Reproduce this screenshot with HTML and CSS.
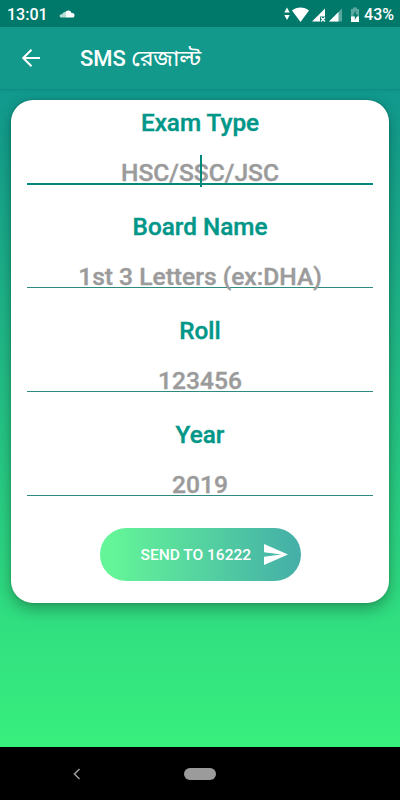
FILE: index.html
```
<!DOCTYPE html>
<html lang="bn">

<head>
    <meta charset="UTF-8">
    <meta name="viewport" content="width=device-width, initial-scale=1.0">
    <title>SMS রেজাল্ট</title>
    <link rel="stylesheet" href="styles.css">
</head>

<body>
    <div class="status-bar">
        <span class="clock">13:01</span>
        <svg class="cloud" width="16" height="9" viewBox="0 0 16 9">
            <path d="M7 1.2C10 -.5 12.200 1 12.500 3.200C14.500 2.800 15.700 4 15.500 5.600C15.400 7 14.500 7.600 13.500 7.600H7z" fill="#fff" />
            <path d="M7 1.500V7.600H2.500C0 7.500 0 4.500 2.500 4.300C3.500 4.200 4 2 7 1.500z" fill="#b9dcd7" />
        </svg>
        <div class="status-icons">
            <svg width="81" height="18" viewBox="0 0 81 18" fill="#fff">
                <path d="M3 2.500l2.700 5h-5.400zM3 15l2.700-5h-5.400z" />
                <path d="M8 5.400C12.500 1.500 20.500 1.500 25 5.400L16.500 17z" />
                <path d="M28 16.500L41 3.500v8h-5v5z" />
                <path d="M37 12.500l4 4M41 12.500l-4 4" stroke="#fff" stroke-width="1.300" />
                <path d="M58 3.500v13H45z" opacity=".35" />
                <path d="M54.500 7V16.500H45z" />
                <path d="M67 4h2V2.500h4V4h2v9h-8z" opacity=".35" />
                <path d="M67 11.500h8v5.500h-8z" />
                <path d="M71.800 5.500l-3 5h2V15l3.200-5.500h-2.200z" fill="#00796b" />
            </svg>
            <span class="battery">43%</span>
        </div>
    </div>

    <header class="app-bar">
        <svg class="back" width="20" height="20" viewBox="0 0 20 20" fill="none" stroke="#fff" stroke-width="2">
            <path d="M19 10H2.500M10.500 1.700L2.200 10l8.300 8.300" />
        </svg>
        <h1 class="title">SMS <span>রেজাল্ট</span></h1>
    </header>

    <main class="content">
        <form class="card">
            <div class="field">
                <label for="exam">Exam Type</label>
                <div class="input-wrap focused">
                    <input type="text" id="exam" placeholder="HSC/SSC/JSC">
                    <span class="caret"></span>
                </div>
            </div>
            <div class="field">
                <label for="board">Board Name</label>
                <div class="input-wrap">
                    <input type="text" id="board" placeholder="1st 3 Letters (ex:DHA)">
                </div>
            </div>
            <div class="field">
                <label for="roll">Roll</label>
                <div class="input-wrap">
                    <input type="text" id="roll" placeholder="123456">
                </div>
            </div>
            <div class="field">
                <label for="year">Year</label>
                <div class="input-wrap">
                    <input type="text" id="year" placeholder="2019">
                </div>
            </div>
            <button type="button" class="send">
                <span>SEND TO 16222</span>
                <svg width="24" height="21" viewBox="0 0 24 21" fill="#fff">
                    <path d="M0 21L24 10.500 0 0v8.200l17 2.300-17 2.300z" />
                </svg>
            </button>
        </form>
    </main>

    <nav class="nav-bar">
        <svg class="nav-back" width="8" height="12" viewBox="0 0 8 12" fill="none" stroke="#999" stroke-width="1.600">
            <path d="M6.500 1L1.500 6l5 5" />
        </svg>
        <span class="nav-home"></span>
    </nav>
</body>

</html>
```
FILE: styles.css
```
* {
    box-sizing: border-box;
}

body {
    margin: 0;
    height: 800px;
    display: flex;
    flex-direction: column;
    overflow: hidden;
    font-family: Roboto, 'Noto Sans Bengali', sans-serif;
    background: #000;
}

/* status bar */
.status-bar {
    height: 27px;
    flex: none;
    display: flex;
    align-items: center;
    padding: 1px 7px 0;
    background: #00796b;
    color: #fff;
    font-size: 16px;
    font-weight: 500;
}

.cloud {
    margin-left: 11px;
}

.status-icons {
    display: flex;
    align-items: center;
    margin-left: auto;
}

.status-icons svg {
    margin-top: -1px;
    margin-right: -1px;
}

.battery {
    margin-right: -1px;
}

/* toolbar */
.app-bar {
    height: 62px;
    flex: none;
    display: flex;
    align-items: center;
    padding-left: 21px;
    background: #12998c;
    color: #fff;
    box-shadow: 0 1px 2px rgba(0, 0, 0, 0.12);
    z-index: 1;
}

.title {
    margin: 3px 0 0 39px;
    font-size: 22px;
    font-weight: 500;
}

.title span {
    font-size: 23px;
    font-weight: 400;
}

/* form */
.content {
    flex: 1;
    padding: 11px 11px 0;
    background: linear-gradient(#11998e, #38ef7d);
}

.card {
    height: 503px;
    padding: 8px 16px 0;
    border-radius: 22px;
    background: #fff;
    box-shadow: 0 6px 16px rgba(0, 0, 0, 0.3), 0 0 3px rgba(0, 0, 0, 0.2);
    display: flex;
    flex-direction: column;
    align-items: center;
}

.field {
    width: 100%;
    height: 104px;
    text-align: center;
}

.field label {
    display: block;
    height: 30px;
    line-height: 30px;
    font-size: 24.3px;
    font-weight: 500;
    -webkit-text-stroke: 0.4px;
    color: #009688;
}

.input-wrap {
    position: relative;
    height: 46px;
    padding-top: 19px;
    border-bottom: 1px solid #2d8a7e;
}

.input-wrap.focused {
    height: 47px;
    border-bottom: 2px solid #00897b;
}

.input-wrap input {
    display: block;
    width: 100%;
    height: 30px;
    padding: 0;
    border: 0;
    outline: 0;
    background: transparent;
    font-family: inherit;
    font-size: 24.6px;
    font-weight: 500;
    text-align: center;
}

.input-wrap input::placeholder {
    color: #9b9b9b;
    opacity: 1;
    -webkit-text-stroke: 0.4px;
}

.caret {
    position: absolute;
    top: 17px;
    left: 173px;
    width: 2px;
    height: 32px;
    background: #00897b;
}

.send {
    flex: none;
    display: flex;
    align-items: center;
    width: 201px;
    height: 53px;
    margin: 4px 0 0;
    padding: 0 0 0 41px;
    border: 0;
    border-radius: 27px;
    background: linear-gradient(to right, #64f598 5%, #44aea8);
    color: #fff;
    font-family: inherit;
    font-size: 15.5px;
    font-weight: 500;
}

.send svg {
    margin-left: 13px;
}

/* navigation bar */
.nav-bar {
    flex: none;
    height: 53px;
    display: grid;
    grid-template-columns: 184px 1fr;
    align-items: center;
    background: #000;
}

.nav-back {
    margin-left: 73px;
}

.nav-home {
    width: 32px;
    height: 12px;
    border-radius: 6px;
    background: #9b9b9b;
}
```
